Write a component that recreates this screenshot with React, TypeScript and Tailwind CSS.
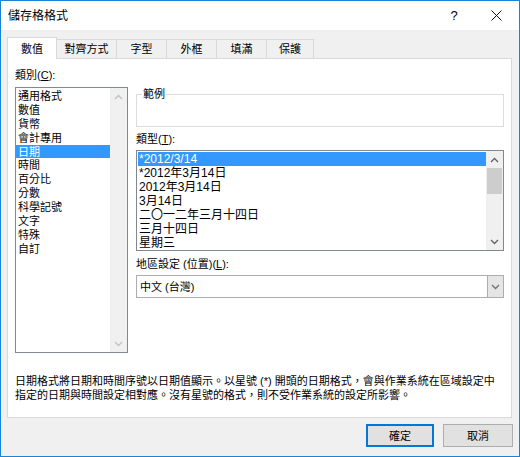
import React from 'react';

const categories = ['通用格式', '數值', '貨幣', '會計專用', '日期', '時間', '百分比', '分數', '科學記號', '文字', '特殊', '自訂'];
const dateTypes = ['*2012/3/14', '*2012年3月14日', '2012年3月14日', '3月14日', '二〇一二年三月十四日', '三月十四日', '星期三'];
const tabs = [
  { label: '數值', w: 'w-[50px]' },
  { label: '對齊方式', w: 'w-[60px]' },
  { label: '字型', w: 'w-[50px]' },
  { label: '外框', w: 'w-[50px]' },
  { label: '填滿', w: 'w-[50px]' },
  { label: '保護', w: 'w-[47px]' },
];

function Chevron({ up, color }: { up?: boolean; color: string }) {
  return (
    <svg width="9" height="6" viewBox="0 0 9 6">
      <polyline
        points={up ? '1,5 4.5,1.5 8,5' : '1,1 4.5,4.5 8,1'}
        fill="none"
        stroke={color}
        strokeWidth="1.3"
      />
    </svg>
  );
}

function ScrollBar({ enabled }: { enabled?: boolean }) {
  const arrow = enabled ? '#606060' : '#c2c2c2';
  return (
    <div className="w-[17px] shrink-0 bg-[#f0f0f0] flex flex-col items-center">
      <div className="h-[17px] flex items-center justify-center">
        <Chevron up color={arrow} />
      </div>
      {enabled && <div className="w-[15px] h-[26px] bg-[#cdcdcd]" />}
      <div className="flex-1" />
      <div className="h-[17px] flex items-center justify-center">
        <Chevron color={arrow} />
      </div>
    </div>
  );
}

export default function App() {
  return (
    <div
      className="w-[520px] h-[457px] border border-[#1883d7] bg-[#f0f0f0] flex flex-col text-black"
      style={{ fontFamily: '"Liberation Sans", "Noto Sans CJK TC", sans-serif' }}
    >
      {/* title bar */}
      <div className="h-[29px] bg-white flex items-center shrink-0">
        <span className="pl-[7px] pt-px text-[12px] leading-[14px]">儲存格格式</span>
        <div className="flex-1" />
        <div className="w-[38px] h-full flex items-center justify-center text-[13px]">?</div>
        <div className="w-[46px] h-full flex items-center justify-center">
          <svg width="11" height="11" viewBox="0 0 11 11">
            <path d="M0.5 0.5 L10.5 10.5 M10.5 0.5 L0.5 10.5" stroke="#111" strokeWidth="1" />
          </svg>
        </div>
      </div>

      <div className="px-[6px] pt-[7px]">
        {/* tabs */}
        <div className="flex items-end h-[21px] relative z-10">
          {tabs.map((t, i) =>
            i === 0 ? (
              <div
                key={t.label}
                className={`${t.w} h-[22px] -mb-px bg-white border border-b-0 border-[#d9d9d9] flex items-center justify-center text-[11px] leading-[14px]`}
              >
                {t.label}
              </div>
            ) : (
              <div
                key={t.label}
                className={`${t.w} h-[19px] border border-l-0 border-b-0 border-[#d9d9d9] bg-[#f0f0f0] flex items-center justify-center text-[11px] leading-[14px]`}
              >
                {t.label}
              </div>
            )
          )}
        </div>

        {/* tab panel */}
        <div className="w-[505px] h-[360px] bg-white border border-[#d9d9d9] flex flex-col">
          <div className="flex items-start pl-[7px]">
            {/* category */}
            <div className="w-[113px] mt-[9px] flex flex-col">
              <div className="text-[11px] leading-[14px]">
                類別(<span className="underline">C</span>):
              </div>
              <div className="mt-[5px] h-[266px] border border-[#828790] flex">
                <div className="flex-1 flex flex-col pt-px">
                  {categories.map((c) => (
                    <div
                      key={c}
                      className={`h-[13.9px] pl-[2px] text-[11px] leading-[14px] ${c === '日期' ? 'bg-[#3399ff] text-white' : ''}`}
                    >
                      {c}
                    </div>
                  ))}
                </div>
                <ScrollBar />
              </div>
            </div>

            {/* type and locale */}
            <div className="w-[368px] ml-[8px] mt-[28px] flex flex-col">
              <fieldset className="h-[40px] border border-[#dcdcdc] px-[5px]">
                <legend className="px-[1px] text-[11px] leading-[14px]">範例</legend>
              </fieldset>

              <div className="mt-[5px] text-[11px] leading-[14px]">
                類型(<span className="underline">T</span>):
              </div>
              <div className="mt-[4px] h-[101px] border border-[#828790] flex">
                <div className="flex-1 flex flex-col pl-px pt-px">
                  {dateTypes.map((d, i) => (
                    <div
                      key={d}
                      className={`h-[14px] pl-px text-[12px] leading-[14px] whitespace-nowrap ${i === 0 ? 'bg-[#3399ff] text-white' : ''}`}
                    >
                      {d}
                    </div>
                  ))}
                </div>
                <ScrollBar enabled />
              </div>

              <div className="mt-[3px] text-[11px] leading-[14px] pt-[3px]">
                地區設定 (位置)(<span className="underline">L</span>):
              </div>
              <div className="mt-[4px] h-[23px] border border-[#abadb3] flex items-stretch">
                <div className="flex-1 flex items-center pl-[3px] text-[11px] leading-[14px]">中文 (台灣)</div>
                <div className="w-[16px] bg-[#e5e5e5] border-l border-[#acacac] flex items-center justify-center">
                  <Chevron color="#707070" />
                </div>
              </div>
            </div>
          </div>

          <div className="mt-auto mb-[15px] px-[7px] text-[11px] leading-[14px]">
            日期格式將日期和時間序號以日期值顯示。以星號 (*) 開頭的日期格式，會與作業系統在區域設定中
            <br />
            指定的日期與時間設定相對應。沒有星號的格式，則不受作業系統的設定所影響。
          </div>
        </div>
      </div>

      {/* buttons */}
      <div className="flex justify-end gap-[9px] pt-[6px] pr-[6px]">
        <button className="w-[68px] h-[23px] bg-[#e1e1e1] border border-[#0078d7] shadow-[inset_0_0_0_1px_#0078d7] text-[11px] leading-[14px]">
          確定
        </button>
        <button className="w-[70px] h-[23px] bg-[#e1e1e1] border border-[#adadad] text-[11px] leading-[14px]">
          取消
        </button>
      </div>
    </div>
  );
}
